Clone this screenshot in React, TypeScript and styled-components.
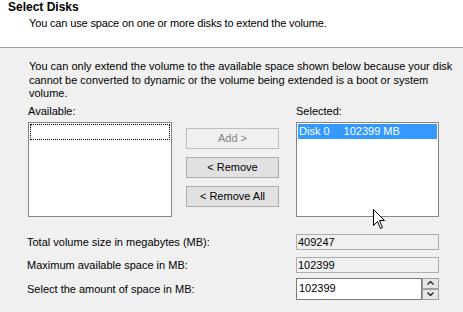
import styled, { createGlobalStyle } from "styled-components";

const GlobalStyle = createGlobalStyle`
	html, body {
		margin: 0;
		padding: 0;
		background: #f0f0f0;
	}
	body {
		font-family: "Liberation Sans", Arial, sans-serif;
		font-size: 11px;
		color: #000;
	}
`;

const Cursor = () => (
	<CursorWrap width="13" height="21" viewBox="0 0 13 21">
		<path
			d="M0.5 0.5 L0.5 16.5 L4.5 12.5 L7.5 19.5 L9.5 18.5 L6.5 11.5 L11.5 11.5 Z"
			fill="#fff"
			stroke="#000"
			strokeWidth="1"
			strokeLinejoin="miter"
		/>
	</CursorWrap>
);

const Chevron = ({ up }: { up?: boolean }) => (
	<svg width="7" height="4" viewBox="0 0 7 4">
		<path
			d={up ? "M0.5 3.5 L3.5 0.5 L6.5 3.5" : "M0.5 0.5 L3.5 3.5 L6.5 0.5"}
			fill="none"
			stroke="#222"
			strokeWidth="1.3"
		/>
	</svg>
);

export default function App() {
	const fields = [
		{ label: "Total volume size in megabytes (MB):", value: "409247" },
		{ label: "Maximum available space in MB:", value: "102399" },
	];

	return (
		<Page>
			<GlobalStyle />
			<Header>
				<Title>Select Disks</Title>
				<Subtitle>You can use space on one or more disks to extend the volume.</Subtitle>
			</Header>
			<Body>
				<Notice>
					You can only extend the volume to the available space shown below because your disk
					<br />
					cannot be converted to dynamic or the volume being extended is a boot or system
					<br />
					volume.
				</Notice>
				<Pickers>
					<ListColumn>
						<Label>Available:</Label>
						<ListBox>
							<FocusItem />
						</ListBox>
					</ListColumn>
					<ButtonColumn>
						<Button disabled>Add &gt;</Button>
						<Button>&lt; Remove</Button>
						<Button>&lt; Remove All</Button>
					</ButtonColumn>
					<ListColumn $right>
						<Label>Selected:</Label>
						<ListBox>
							<SelectedItem>
								<span>Disk 0</span>
								<span>102399 MB</span>
							</SelectedItem>
						</ListBox>
					</ListColumn>
				</Pickers>
				<Form>
					{fields.map((f) => (
						<Row key={f.label} $gap={f.label.startsWith("Max") ? 7 : 0}>
							<FieldLabel>{f.label}</FieldLabel>
							<ReadOnly>{f.value}</ReadOnly>
						</Row>
					))}
					<Row $gap={5}>
						<FieldLabel>Select the amount of space in MB:</FieldLabel>
						<UpDown>
							<UpDownInput>102399</UpDownInput>
							<Spinner>
								<SpinButton>
									<Chevron up />
								</SpinButton>
								<SpinButton>
									<Chevron />
								</SpinButton>
							</Spinner>
						</UpDown>
					</Row>
				</Form>
			</Body>
			<Cursor />
		</Page>
	);
}

const Page = styled.div`
	position: relative;
	width: 463px;
	height: 312px;
	overflow: hidden;
	background: #f0f0f0;
`;

const Header = styled.header`
	height: 48px;
	box-sizing: border-box;
	background: #fff;
	border-bottom: 1px solid #a0a0a0;
	padding: 0 0 0 8px;
`;

const Title = styled.h1`
	margin: 0;
	font-size: 12px;
	font-weight: 700;
	line-height: 14px;
`;

const Subtitle = styled.p`
	margin: 2px 0 0 21px;
	line-height: 14px;
	letter-spacing: -0.15px;
`;

const Body = styled.div`
	padding: 12px 0 0 28px;
`;

const Notice = styled.p`
	margin: 0 0 0 1px;
	line-height: 13.5px;
	white-space: nowrap;
`;

const Pickers = styled.div`
	display: flex;
	margin-top: 3px;
`;

const ListColumn = styled.div<{ $right?: boolean }>`
	display: flex;
	flex-direction: column;
	width: ${({ $right }) => ($right ? "143px" : "144px")};
	margin-left: ${({ $right }) => ($right ? "17px" : "0")};
`;

const Label = styled.div`
	line-height: 14px;
	margin-bottom: 4px;
`;

const ListBox = styled.div`
	box-sizing: border-box;
	height: 95px;
	background: #fff;
	border: 1px solid #828790;
	padding: 1px;
`;

const FocusItem = styled.div`
	height: 16px;
	box-sizing: border-box;
	border: 1px dotted #000;
`;

const SelectedItem = styled.div`
	display: flex;
	gap: 14px;
	height: 15px;
	line-height: 15px;
	padding-left: 1px;
	background: #3399ff;
	color: #fff;
`;

const ButtonColumn = styled.div`
	display: flex;
	flex-direction: column;
	gap: 8px;
	width: 93px;
	margin-left: 14px;
	padding-top: 24px;
`;

const Button = styled.button`
	height: 21px;
	padding: 0;
	font: inherit;
	color: #000;
	background: #e1e1e1;
	border: 1px solid #adadad;
	&:disabled {
		color: #838383;
		background: #f0f0f0;
		border-color: #bfbfbf;
	}
`;

const Form = styled.div`
	display: flex;
	flex-direction: column;
	margin-top: 17px;
`;

const Row = styled.div<{ $gap: number }>`
	display: grid;
	grid-template-columns: 268px 143px;
	align-items: center;
	margin-top: ${({ $gap }) => $gap}px;
`;

const FieldLabel = styled.div`
	margin-left: -1px;
`;

const ReadOnly = styled.div`
	box-sizing: border-box;
	height: 16px;
	line-height: 14px;
	padding-left: 1px;
	background: #f0f0f0;
	border: 1px solid #adadad;
`;

const UpDown = styled.div`
	display: flex;
	height: 22px;
`;

const UpDownInput = styled.div`
	flex: 1;
	box-sizing: border-box;
	line-height: 18px;
	padding-left: 2px;
	background: #fff;
	border: 1px solid #7a7a7a;
`;

const Spinner = styled.div`
	display: flex;
	flex-direction: column;
	justify-content: space-between;
	width: 17px;
`;

const SpinButton = styled.div`
	display: flex;
	align-items: center;
	justify-content: center;
	box-sizing: border-box;
	height: 11px;
	background: #e6e6e6;
	border: 1px solid #a0a0a0;
`;

const CursorWrap = styled.svg`
	position: absolute;
	left: 373px;
	top: 209px;
`;
